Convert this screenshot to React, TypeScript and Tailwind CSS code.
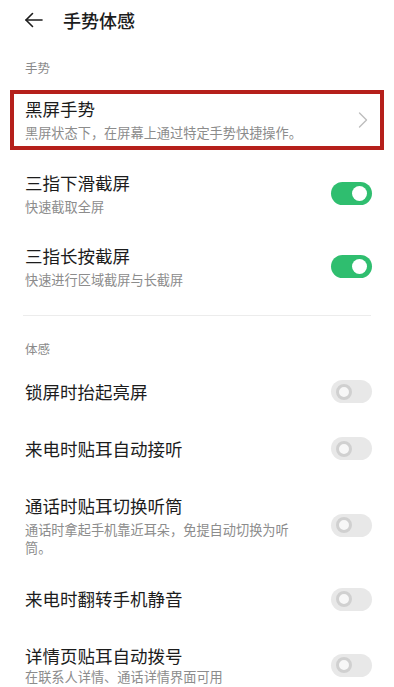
import React from "react";

type Row = {
  title: string;
  subtitle?: string;
  on: boolean;
  pad: string;
  subGap?: string;
};

const FONT = { fontFamily: '"Noto Sans CJK SC", "Noto Sans", sans-serif' };

const gestureRows: Row[] = [
  { title: "三指下滑截屏", subtitle: "快速截取全屏", on: true, pad: "py-[14px]", subGap: "mt-[3px]" },
  { title: "三指长按截屏", subtitle: "快速进行区域截屏与长截屏", on: true, pad: "py-[14px]", subGap: "mt-[3px]" },
];

const senseRows: Row[] = [
  { title: "锁屏时抬起亮屏", on: false, pad: "py-[16.5px]" },
  { title: "来电时贴耳自动接听", on: false, pad: "py-[16.5px]" },
  {
    title: "通话时贴耳切换听筒",
    subtitle: "通话时拿起手机靠近耳朵，免提自动切换为听筒。",
    on: false,
    pad: "pt-[16.5px] pb-[14px]",
    subGap: "mt-[3px]",
  },
  { title: "来电时翻转手机静音", on: false, pad: "py-[16.5px]" },
  { title: "详情页贴耳自动拨号", subtitle: "在联系人详情、通话详情界面可用", on: false, pad: "pt-[16.5px] pb-[14px]", subGap: "mt-0" },
];

function Toggle({ on }: { on: boolean }) {
  if (on) {
    return (
      <div className="flex h-[23px] w-[41px] shrink-0 items-center justify-end rounded-full bg-[#2fbe6f] pr-[5px]">
        <span className="size-[15px] rounded-full bg-white" />
      </div>
    );
  }
  return (
    <div className="flex h-[23px] w-[41px] shrink-0 items-center rounded-full bg-[#e8e8e8] pl-[5px]">
      <span className="size-[16px] rounded-full border-[3px] border-[#d0d0d0] bg-[#f7f7f7]" />
    </div>
  );
}

function SettingRow({ row }: { row: Row }) {
  return (
    <div className={`flex items-center justify-between pl-[25px] pr-[22px] ${row.pad}`}>
      <div className="flex flex-col">
        <span className="text-[17.5px] leading-[24px] text-[#1c1c1c]">{row.title}</span>
        {row.subtitle ? (
          <span className={`max-w-[268px] text-[13.2px] leading-[18px] text-[#8c8c8c] ${row.subGap ?? ""}`}>
            {row.subtitle}
          </span>
        ) : null}
      </div>
      <Toggle on={row.on} />
    </div>
  );
}

export default function App() {
  return (
    <div className="min-h-screen w-full overflow-hidden bg-white" style={FONT}>
      <header className="flex h-[40px] items-center pl-[24px]">
        <svg width="19" height="16" viewBox="0 0 19 16" fill="none" stroke="#1c1c1c" strokeWidth="1.6" strokeLinecap="round" strokeLinejoin="round">
          <path d="M18 8H2" />
          <path d="M8.5 1.5L2 8l6.5 6.5" />
        </svg>
        <h1 className="ml-[20px] text-[18px] font-medium leading-[24px] text-[#1c1c1c]">手势体感</h1>
      </header>

      <div className="mt-[19px] pl-[25px] text-[12.5px] leading-[18px] text-[#8a8a8a]">手势</div>

      <div className="mx-[10px] mt-[13px] flex items-center justify-between border-4 border-[#b5201b] pb-[4px] pl-[11px] pr-[12px] pt-[3px]">
        <div className="flex flex-col">
          <span className="text-[17.5px] leading-[24px] text-[#1c1c1c]">黑屏手势</span>
          <span className="mt-[3px] whitespace-nowrap text-[13.2px] leading-[18px] text-[#8c8c8c]">
            黑屏状态下，在屏幕上通过特定手势快捷操作。
          </span>
        </div>
        <svg width="10" height="16" viewBox="0 0 10 16" fill="none" stroke="#bdbdbd" strokeWidth="1.4" strokeLinecap="round" strokeLinejoin="round">
          <path d="M1.5 1l7 7-7 7" />
        </svg>
      </div>

      <div className="mt-[7px]">
        {gestureRows.map((row) => (
          <SettingRow key={row.title} row={row} />
        ))}
      </div>

      <div className="mx-[23px] mt-[12px] h-px bg-[#ececec]" />

      <div className="mt-[24px] pl-[25px] text-[12.5px] leading-[18px] text-[#8a8a8a]">体感</div>

      <div className="mt-[5px]">
        {senseRows.map((row) => (
          <SettingRow key={row.title} row={row} />
        ))}
      </div>
    </div>
  );
}
